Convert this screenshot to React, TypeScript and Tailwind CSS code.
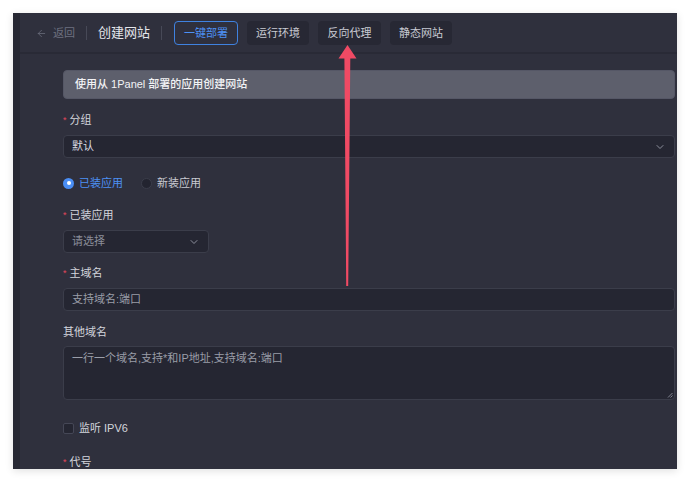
import React from "react";
import { ArrowLeft, ChevronDown } from "lucide-react";

const font = { fontFamily: '"Liberation Sans", "Noto Sans CJK SC", sans-serif' };

function Label({ text, required = true }: { text: string; required?: boolean }) {
  return (
    <div className="flex h-[16px] items-center text-[11px] leading-[16px] text-[#d3d5dc]">
      {required && <span className="mr-[3px] text-[9px] text-[#e2475c]">*</span>}
      <span>{text}</span>
    </div>
  );
}

function Box({ children, className = "" }: { children?: React.ReactNode; className?: string }) {
  return (
    <div
      className={
        "flex items-center rounded-[4px] border border-[#3b3d4a] bg-[#252632] px-[8px] text-[11px] " +
        className
      }
    >
      {children}
    </div>
  );
}

export default function App() {
  return (
    <div className="relative h-[482px] w-[690px] overflow-hidden bg-white p-[13px]" style={font}>
      <div className="flex h-[456px] w-[664px] overflow-hidden bg-[#2f303d] shadow-[0_2px_8px_rgba(0,0,0,0.12)]">
        <div className="w-[7px] shrink-0 bg-[#272833]" />
        <div className="flex min-w-0 flex-1 flex-col">
          {/* header */}
          <div className="flex h-[41px] shrink-0 items-center border-b-2 border-[#292a36] pl-[16px] pt-[1px]">
            <div className="flex items-center text-[11px] text-[#6e7180]">
              <ArrowLeft size={11} strokeWidth={1.6} />
              <span className="ml-[6px]">返回</span>
            </div>
            <div className="mx-[11px] h-[14px] w-px bg-[#474957]" />
            <div className="text-[13px] text-[#e4e6eb]">创建网站</div>
            <div className="ml-[11px] mr-[12px] h-[14px] w-px bg-[#474957]" />
            <div className="flex items-center gap-[9px] text-[11px]">
              <div className="flex h-[24px] w-[64px] items-center justify-center rounded-[4px] border border-[#3f82e0] text-[#4d91f5]">
                一键部署
              </div>
              <div className="flex h-[24px] w-[62px] items-center justify-center rounded-[4px] bg-[#272834] text-[#c9cbd3]">
                运行环境
              </div>
              <div className="flex h-[24px] w-[63px] items-center justify-center rounded-[4px] bg-[#272834] text-[#c9cbd3]">
                反向代理
              </div>
              <div className="flex h-[24px] w-[62px] items-center justify-center rounded-[4px] bg-[#272834] text-[#c9cbd3]">
                静态网站
              </div>
            </div>
          </div>

          {/* content */}
          <div className="flex flex-col pl-[43px] pr-[2px] pt-[16px]">
            <div className="flex h-[29px] items-center rounded-[4px] border border-[#555766] bg-[#5d5f6c] pl-[11px] text-[11px] font-medium text-[#f2f3f5]">
              使用从 1Panel 部署的应用创建网站
            </div>

            <div className="mt-[13px]">
              <Label text="分组" />
            </div>
            <Box className="mt-[7px] h-[23px] justify-between text-[#d9dbe1]">
              <span>默认</span>
              <ChevronDown size={12} className="text-[#8c8f9c]" />
            </Box>

            <div className="mt-[17px] flex h-[16px] items-center text-[11px]">
              <div className="flex h-[11px] w-[11px] items-center justify-center rounded-full bg-[#4a8ef5]">
                <div className="h-[4px] w-[4px] rounded-full bg-white" />
              </div>
              <span className="ml-[5px] text-[#4d91f5]">已装应用</span>
              <div className="ml-[18px] h-[11px] w-[11px] rounded-full border border-[#3b3d4a] bg-[#232430]" />
              <span className="ml-[5px] text-[#c9cbd3]">新装应用</span>
            </div>

            <div className="mt-[16px]">
              <Label text="已装应用" />
            </div>
            <Box className="mt-[7px] h-[23px] w-[146px] justify-between text-[#8b8e9a]">
              <span>请选择</span>
              <ChevronDown size={12} className="text-[#8c8f9c]" />
            </Box>

            <div className="mt-[12px]">
              <Label text="主域名" />
            </div>
            <Box className="mt-[7px] h-[23px] text-[#9a9da8]">
              <span>支持域名:端口</span>
            </Box>

            <div className="mt-[13px]">
              <Label text="其他域名" required={false} />
            </div>
            <div className="relative mt-[6px] h-[54px] rounded-[4px] border border-[#3b3d4a] bg-[#252632] px-[8px] pt-[3px] text-[11px] text-[#9a9da8]">
              一行一个域名,支持*和IP地址,支持域名:端口
              <svg className="absolute bottom-[1px] right-[1px]" width="6" height="6" viewBox="0 0 6 6">
                <path d="M1 5.5 L5.5 1 M3.5 5.5 L5.5 3.5" stroke="#8c8f9c" strokeWidth="0.9" />
              </svg>
            </div>

            <div className="mt-[20px] flex h-[16px] items-center text-[11px] text-[#d3d5dc]">
              <div className="h-[11px] w-[11px] rounded-[2px] border border-[#454756] bg-[#252632]" />
              <span className="ml-[5px]">监听 IPV6</span>
            </div>

            <div className="mt-[18px]">
              <Label text="代号" />
            </div>
          </div>
        </div>
      </div>

      {/* red annotation arrow */}
      <svg className="pointer-events-none absolute left-0 top-0" width="690" height="482" viewBox="0 0 690 482">
        <polygon
          points="347.5,45 356.5,58.5 350.3,58.5 348.2,286 346.2,286 344.4,58.5 338.5,58.5"
          fill="#f04a64"
        />
      </svg>
    </div>
  );
}
